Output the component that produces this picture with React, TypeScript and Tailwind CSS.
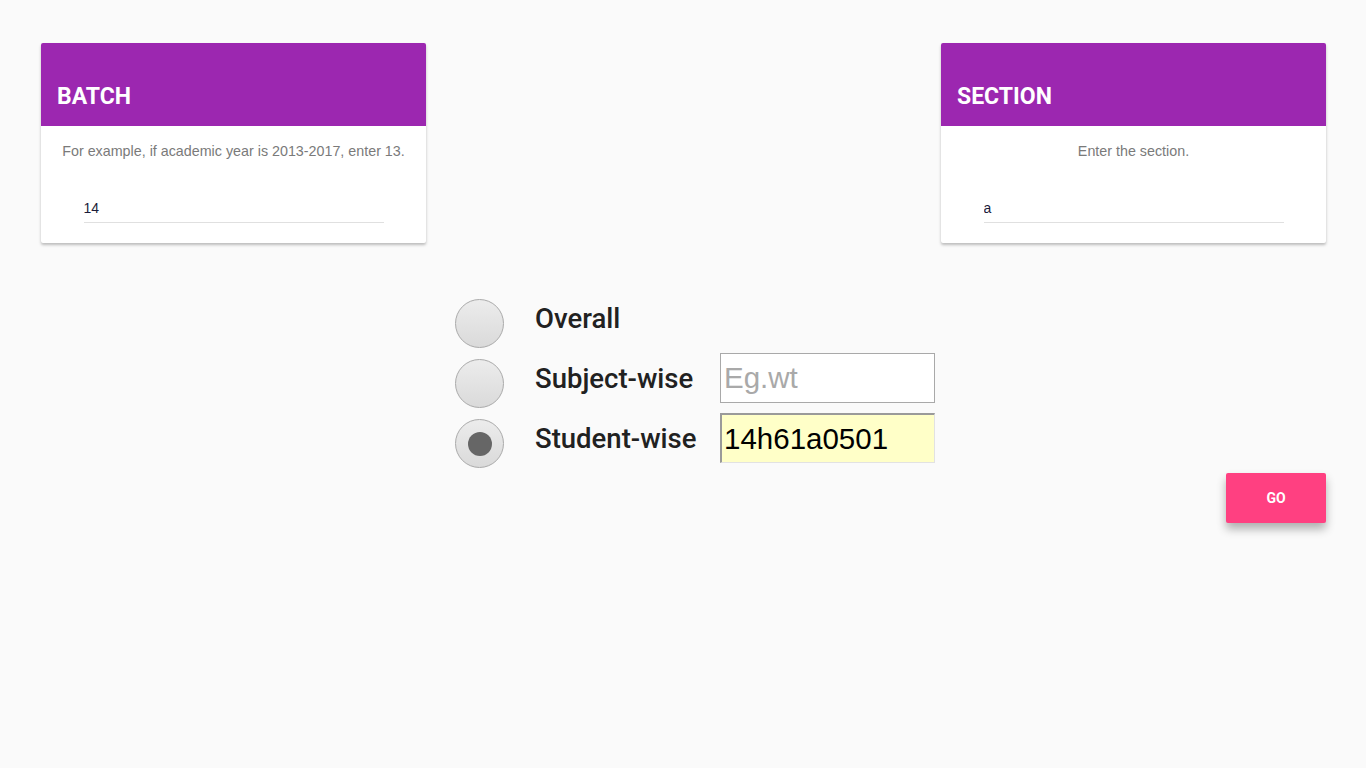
const Card = ({ title, hint, value }: { title: string; hint: string; value: string }) => {
  return (
    <div className="w-[385px] h-[200px] bg-white rounded-[2px] shadow-[0_2px_3px_rgba(0,0,0,0.25)] overflow-hidden">
      <div className="h-[83px] bg-[#9c27b0] flex items-end px-4 pb-[18px]">
        <h2 className="text-white text-[23px] leading-[23px] font-bold font-['Roboto',sans-serif]">{title}</h2>
      </div>
      <p className="pt-[17px] text-center text-[14.3px] leading-4 text-[#7a7a7a] font-['Liberation_Sans',Arial,sans-serif]">
        {hint}
      </p>
      <input
        defaultValue={value}
        className="block mx-auto mt-[34px] w-[300px] h-[30px] border-b border-[#e0e0e0] bg-transparent text-[14px] text-[#1c1c3a] outline-none font-['Liberation_Sans',Arial,sans-serif]"
      />
    </div>
  );
};

const Radio = ({ checked }: { checked?: boolean }) => (
  <div className="mt-[6px] w-[49px] h-[49px] rounded-full border border-[#aaa] bg-gradient-to-b from-[#ececec] to-[#dadada] flex items-center justify-center shrink-0">
    {checked && <div className="w-6 h-6 rounded-full bg-[#666]" />}
  </div>
);

export default function App() {
  return (
    <div className="min-h-screen bg-[#fafafa] pt-[43px] pl-[41px] pr-[40px]">
      <div className="flex justify-between">
        <Card title="BATCH" hint="For example, if academic year is 2013-2017, enter 13." value="14" />
        <Card title="SECTION" hint="Enter the section." value="a" />
      </div>

      <div className="mt-[50px] ml-[414px] flex flex-col font-['Roboto',sans-serif]">
        <div className="h-[60px] flex items-start">
          <Radio />
          <span className="ml-[31px] h-[50px] pt-[2px] flex items-center text-[27.5px] font-medium text-[#212121]">Overall</span>
        </div>
        <div className="h-[60px] flex items-start">
          <Radio />
          <span className="ml-[31px] w-[185px] h-[50px] pt-[2px] flex items-center text-[27.5px] font-medium text-[#212121]">Subject-wise</span>
          <input
            placeholder="Eg.wt"
            className="w-[215px] h-[50px] border border-[#a9a9a9] bg-white px-[3px] text-[29.5px] text-black placeholder:text-[#a9a9a9] outline-none font-['Liberation_Sans',Arial,sans-serif]"
          />
        </div>
        <div className="h-[60px] flex items-start">
          <Radio checked />
          <span className="ml-[31px] w-[185px] h-[50px] pt-[2px] flex items-center text-[27.5px] font-medium text-[#212121]">Student-wise</span>
          <input
            defaultValue="14h61a0501"
            className="w-[215px] h-[50px] border-t-2 border-l-2 border-r border-b border-t-[#9a9a9a] border-l-[#9a9a9a] border-r-[#e2e2e2] border-b-[#e2e2e2] bg-[#ffffc8] px-[2px] text-[29.5px] text-black outline-none font-['Liberation_Sans',Arial,sans-serif]"
          />
        </div>
      </div>

      <div className="flex justify-end">
        <button className="w-[100px] h-[50px] rounded-[2px] bg-[#ff4081] text-white text-[14px] font-bold font-['Roboto',sans-serif] shadow-[0_6px_10px_rgba(0,0,0,0.3)]">
          GO
        </button>
      </div>
    </div>
  );
}
